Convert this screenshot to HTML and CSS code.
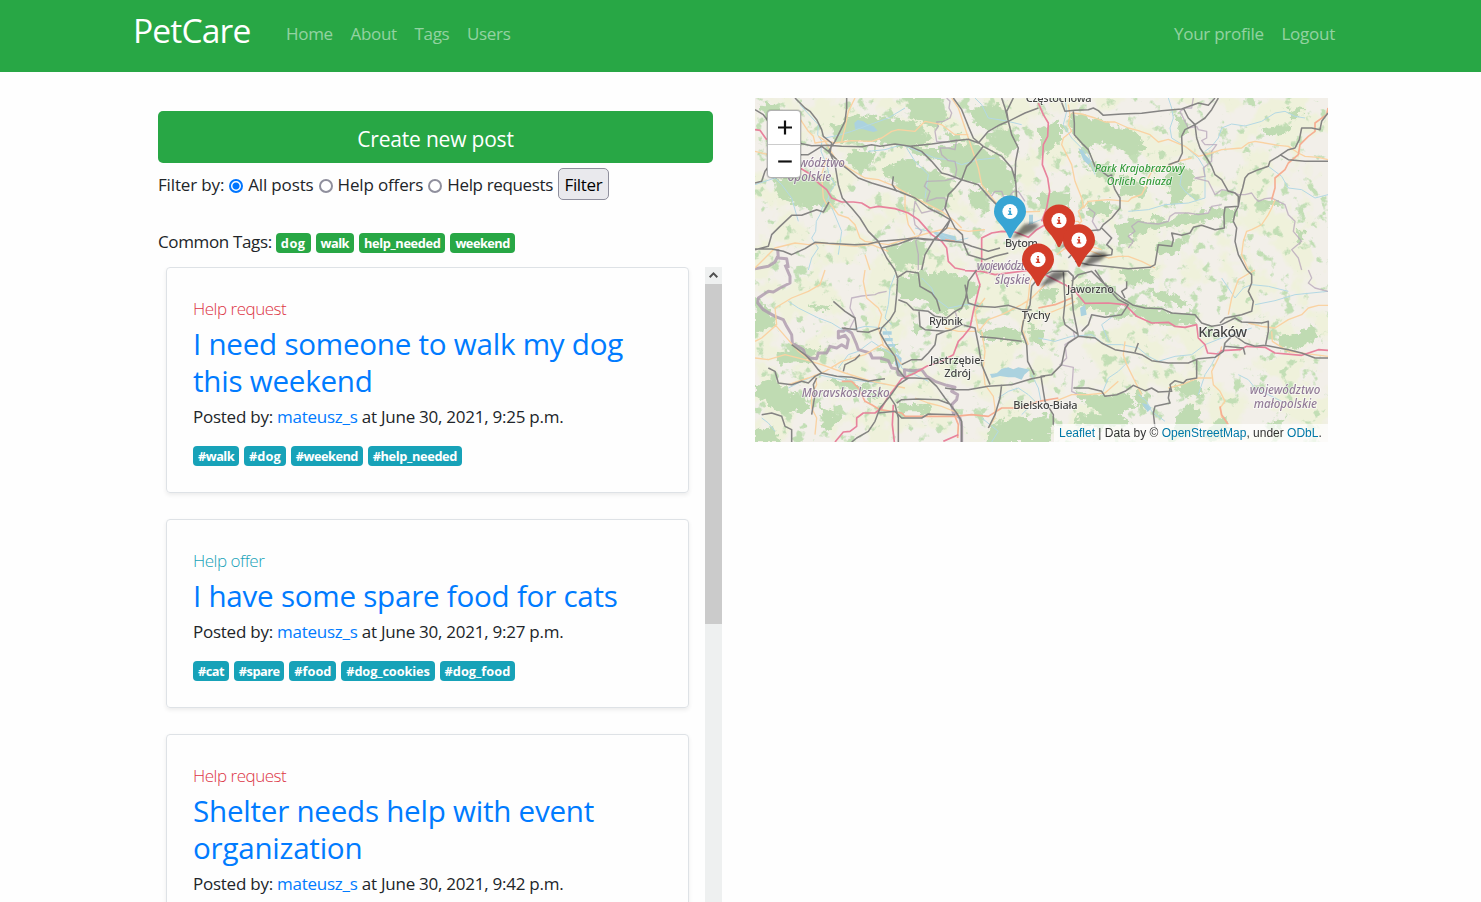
FILE: index.html
```html
<!DOCTYPE html>
<html lang="en">
<head>
<meta charset="utf-8">
<title>PetCare</title>
<link rel="stylesheet" href="styles.css">
</head>
<body>
<nav class="navbar">
  <a class="brand">PetCare</a>
  <div class="links"><a>Home</a><a>About</a><a>Tags</a><a>Users</a></div>
  <div class="links links-right"><a>Your profile</a><a>Logout</a></div>
</nav>
<main class="page">
  <section class="feed">
    <div class="tools">
      <a class="create">Create new post</a>
      <form class="filter">
        <span class="lead">Filter by:</span>
        <i class="radio on"></i><label>All posts</label>
        <i class="radio"></i><label>Help offers</label>
        <i class="radio"></i><label class="snug">Help requests</label>
        <button type="button">Filter</button>
      </form>
      <div class="common"><span class="snug">Common Tags:</span><b class="badge wider">dog</b><b class="badge tight">walk</b><b class="badge mid">help_needed</b><b class="badge tight">weekend</b></div>
    </div>
    <div class="scroller">
      <div class="posts">
        <article class="card">
          <div class="kind request">Help request</div>
          <h2>I need someone to walk my dog<br>this weekend</h2>
          <p>Posted by: <a>mateusz_s</a> at June 30, 2021, 9:25 p.m.</p>
          <div class="tags"><b class="badge tight">#walk</b><b class="badge wide">#dog</b><b class="badge tight">#weekend</b><b class="badge mid">#help_needed</b></div>
        </article>
        <article class="card short">
          <div class="kind offer">Help offer</div>
          <h2>I have some spare food for cats</h2>
          <p>Posted by: <a>mateusz_s</a> at June 30, 2021, 9:27 p.m.</p>
          <div class="tags"><b class="badge tight">#cat</b><b class="badge tight">#spare</b><b class="badge">#food</b><b class="badge close">#dog_cookies</b><b class="badge">#dog_food</b></div>
        </article>
        <article class="card">
          <div class="kind request">Help request</div>
          <h2>Shelter needs help with event<br>organization</h2>
          <p>Posted by: <a>mateusz_s</a> at June 30, 2021, 9:42 p.m.</p>
        </article>
      </div>
      <div class="scrollbar">
        <svg class="arrow" viewBox="0 0 17 17"><path d="M4.7 10.2 8.5 6.4l3.8 3.8" fill="none" stroke="#505050" stroke-width="2"/></svg>
        <div class="thumb"></div>
      </div>
    </div>
  </section>
  <section class="map">
    <svg class="tiles" viewBox="0 0 1719 1032">
      <defs>
        <filter id="woods" x="0" y="0" width="100%" height="100%" color-interpolation-filters="sRGB">
          <feTurbulence type="fractalNoise" baseFrequency="0.026" numOctaves="4" seed="7"/>
          <feColorMatrix values="0 0 0 0 .76  0 0 0 0 .87  0 0 0 0 .71  9 0 0 0 -5.5"/>
        </filter>
        <filter id="fields" x="0" y="0" width="100%" height="100%" color-interpolation-filters="sRGB">
          <feTurbulence type="fractalNoise" baseFrequency="0.009" numOctaves="4" seed="21"/>
          <feColorMatrix values="0 0 0 0 .937  0 0 0 0 .945  0 0 0 0 .86  0 9 0 0 -4.2"/>
        </filter>
        <filter id="edge" x="-5%" y="-5%" width="110%" height="110%">
          <feTurbulence type="fractalNoise" baseFrequency="0.045" numOctaves="3" seed="3"/>
          <feDisplacementMap in="SourceGraphic" scale="42" xChannelSelector="R" yChannelSelector="G"/>
          <feGaussianBlur stdDeviation="1.500"/>
        </filter>
        <filter id="blur"><feGaussianBlur stdDeviation="1.6"/></filter>
        <g id="pin">
          <path d="M3 25 14 13Q24 10 29 14L22 20Q12 25 2 27Z" fill="#000" opacity=".5" filter="url(#blur)"/>
          <path d="M-1.200 26Q-3 21-7.500 15.200C-12 10-16 6-16 0A16 16 0 0 1 16 0C16 6 12 10 7.500 15.200Q3 21 1.200 26Q0 27.500-1.200 26Z"/>
          <circle r="7.600" fill="#fff"/>
          <path d="M-.9-3.500H1V-2H-.9ZM-1.900-1H1.100V2.300H2.200V3.400H-2.200V2.300H-.9V0H-1.900Z"/>
        </g>
      </defs>
      <rect width="1719" height="1032" fill="#f2efe9"/>
      <rect width="1719" height="1032" filter="url(#fields)"/>
      <rect width="1719" height="1032" filter="url(#woods)"/>
      <g fill="#bfdbb2" filter="url(#edge)">
        <path d="M225 85 300 50 370 60 480 70 530 130 460 150 350 130 240 135ZM60 240 150 230 235 240 235 320 150 330 70 290ZM290 155 370 160 350 200 320 230 280 190ZM380 220 440 180 520 210 600 250 580 300 560 350 500 310 430 270ZM400 130 500 150 560 150 640 140 680 150 740 180 780 230 775 300 720 290 670 260 620 245 560 200 480 160ZM700 110 780 90 790 140 760 180 690 140ZM450 0 560 0 580 60 540 90 470 60ZM650 30 740 20 760 70 700 100 660 80ZM385 450 480 425 510 440 500 500 420 516ZM560 100 640 120 600 140ZM20 0 70 20 110 70 60 90 30 50ZM640 270 700 280 700 340 650 330ZM350 100 420 90 400 130Z"/>
        <path transform="translate(855)" d="M0 90 60 60 60 130 20 170 0 150ZM90 50 170 60 230 90 290 100 320 150 270 170 180 130 130 170 100 110ZM140 190 210 200 230 220 190 240 150 220ZM0 280 90 285 100 320 30 340 0 330ZM140 310 210 310 210 350 150 355ZM380 230 430 200 470 230 440 290 400 330ZM240 230 330 270 300 300 240 290ZM220 390 280 360 350 380 420 350 540 330 560 350 450 380 320 400 240 440ZM350 440 430 420 420 460 360 480ZM550 330 590 330 590 370 550 370ZM650 300 720 310 690 340ZM770 395 800 400 780 440ZM670 90 760 80 740 110 680 115ZM740 30 790 40 760 70ZM400 40 440 70 450 110 420 110ZM340 350 380 360 340 400Z"/>
        <path transform="translate(0 516)" d="M425 20 520 5 610 15 680 50 640 100 590 130 550 130 500 90 430 90ZM670 180 760 170 800 190 810 220 740 210 690 210ZM0 80 50 130 60 160 0 200ZM160 100 230 110 210 130ZM0 340 60 330 120 370 60 400 0 380ZM30 390 150 370 160 420 60 430ZM60 280 160 270 200 240 130 230 70 250ZM700 470 770 440 870 450 880 516 690 516ZM370 230 430 230 420 280 380 280ZM210 330 270 330 340 350 300 370ZM420 400 520 410 530 430 440 430ZM820 160 870 190 860 240 825 210ZM190 400 260 440 210 490ZM0 480 60 470 70 516 0 516ZM470 150 500 170 480 200ZM340 380 380 340 370 400Z"/>
        <path transform="translate(855 516)" d="M10 50 55 60 40 95 5 85ZM110 40 200 40 250 90 230 130 170 120 120 110ZM240 95 340 110 390 130 470 130 460 160 340 160 290 135ZM310 60 400 70 460 110 380 100ZM710 200 780 190 820 160 830 210 760 240 710 230ZM100 360 200 380 260 370 300 410 200 440 130 400ZM120 430 230 430 280 460 170 480 100 460ZM400 350 470 330 500 370 440 380ZM400 440 450 400 480 420 470 480 410 500ZM500 470 560 440 560 500 500 516ZM690 460 740 440 720 480ZM0 440 40 430 30 516 0 516ZM240 0 330 0 340 40 270 40ZM290 360 330 380 310 420 280 380ZM210 140 260 110 280 130 230 150Z"/>
      </g>
      <path fill="#abd2df" d="M298 75 308 66 325 70 340 80 355 84 368 98 355 102 340 98 325 94 300 92ZM530 400 560 404 600 415 605 430 580 432 560 425ZM822 350H834V378H822ZM970 150 985 158 992 172 1010 190 1000 200 985 186ZM383 700H410V710H383ZM388 720H413V730H390ZM395 738H420V746H398ZM420 765 440 780 438 800 432 812 420 800ZM705 828 725 826 740 812 760 808 775 814 790 808 825 815 808 830 800 845 780 838 760 838 735 834 710 840ZM975 630 990 620 995 650 978 655ZM1160 915 1180 920 1190 930 1178 942Z"/>
      <g class="lines">
        <path class="water" d="M135 20 190 80 188 110 200 130 198 160 215 200 222 230 240 260 226 280 220 300 205 320 195 350 184 370 182 400 170 420 190 450 170 480 160 516M210 120 250 112 290 100 330 85 400 60 450 30M340 160 390 155 440 140 480 155 540 180 580 185 620 200 670 185 720 180M220 300 235 340 260 400 250 470M480 390 530 402 560 410 600 430 640 420M455 150 480 190 520 230 510 300M0 260 60 240 80 260 110 300 130 370M660 0 680 20 700 60 750 68 800 80M1240 0 1250 30 1255 60 1245 90 1250 120 1290 145 1330 180 1348 210 1350 240 1350 300 1300 315 1230 320 1180 335 1120 340M1350 160 1370 145 1390 120 1400 90 1430 78 1470 84 1520 70 1560 45 1590 40 1620 55 1650 60M1540 205 1580 235 1600 270 1640 275 1680 300 1719 290M930 0 935 40 925 80 950 120 980 150 1000 170 1020 230M1280 230 1275 260 1290 280 1320 305M820 380 870 360"/>
        <path class="water" d="M100 610 130 630 190 660 230 675 270 700 330 685 390 690 410 730 430 770 440 810 480 830 520 850M250 810 280 770 310 760 350 730 380 750 430 780M420 530 405 570 400 620 390 660 410 680M500 540 530 570 540 600 580 630 630 620 680 620M230 830 280 845 330 850 400 860M100 870 140 850 190 830 280 850M730 900 760 880 790 870 820 890 840 910 800 950M830 830 850 870 860 920M850 720 900 730 950 715 1010 710 1050 740 1100 740 1150 750 1180 775 1210 790 1260 775 1310 770 1350 740 1400 720 1490 690M1060 730 1050 705 1040 680 1080 650M1500 620 1560 608 1620 590 1719 580M1400 540 1420 570 1440 600 1465 570 1490 560 1540 565 1600 580M1390 760 1370 800 1350 830 1330 890M1450 830 1480 845 1500 870 1540 890 1600 920M1120 790 1090 820 1060 840 1040 890M1150 890 1175 910 1190 940 1230 970M680 960 705 980 730 1000 710 1032M20 960 40 975 60 1000"/>
        <path class="border" d="M575 0 585 10 582 30 590 45 585 60 565 70 545 72 550 85 540 100 545 130 580 132 605 125 600 155 580 150 555 150 560 170 580 188 600 190 605 215 600 240 570 248 515 250 508 265 525 280 515 310 545 300 570 300 575 325 560 340 530 338 500 345 480 310 475 350 480 380 500 400 482 430 490 470 490 516M690 290 710 294 720 280 740 280 745 295 760 300 775 280 790 280 810 310M1315 0 1310 30 1290 30 1275 40 1290 70 1300 90 1325 85 1330 95 1355 100 1355 120 1340 128 1350 140 1385 140 1370 160 1370 190 1345 210 1350 235 1320 240 1360 250 1370 270 1380 290 1400 275 1430 280 1450 290 1470 290 1490 285 1500 300 1510 310 1530 302 1550 300 1570 310 1590 320 1600 350 1620 370 1615 400 1640 430 1610 455 1630 480 1640 516M1400 320 1370 325 1360 345 1330 350 1300 345 1260 345 1245 355 1240 370 1210 378 1175 375 1150 370 1130 385 1140 400 1120 415 1135 430 1120 450M285 690 300 660 285 630 290 600 320 594 360 590 370 585 395 580M1660 516 1670 540 1660 555 1680 570 1719 580M955 700 960 720 930 740 935 780 915 800 955 808 950 880 970 890M1000 330 1020 345 1012 370 1030 400M600 640 610 670 600 690"/>
        <path class="frontier" d="M90 500 105 535 105 555 75 570 55 582 40 580 10 600 8 615 25 635 60 655 85 665 95 685 110 710 112 735 145 755 150 770 165 780 185 782 190 765 215 765 225 745 245 750 260 740 275 750 280 725 270 712 250 720 250 700 265 700 270 692 290 705 305 740 310 755 345 765 352 780 375 780 400 788 410 810 425 812 430 830 450 835 448 815 475 818 500 815 515 835 540 850 575 862 600 868 590 880 608 890 605 905 590 920 595 945 615 960 620 985 620 1032M68 453 70 480 95 482 100 510M68 475 60 492 40 505 0 512"/>
        <path class="road" d="M190 115 210 128 240 135 290 128 350 130 380 120 410 100 430 95 480 100 510 70 560 80 600 110 640 110M260 130 270 90 280 40 300 0M120 40 160 100 175 115 180 135 210 130 240 180 280 210 330 240 370 245 420 265 460 290 520 320 560 340 600 370 620 390M590 0 610 30 640 120 660 180 670 210 680 260 720 310 760 350 800 342 855 340M400 460 350 440 300 445 200 435 160 440 120 435 60 450 0 510M220 310 250 350 280 360 300 380 315 420 330 430 400 440 450 425 520 405 580 390 640 400 690 395M450 290 450 330 460 380 480 410M215 180 200 230 205 300 215 320M330 470 345 516M0 160 40 170"/>
        <path class="road" d="M60 630 110 600 160 580 195 560 210 516M100 860 160 840 210 820 260 790 330 770 380 740 410 760 440 800M330 516 325 550 335 600 370 630 380 650 370 690 385 740M180 830 185 860 170 890 170 930 185 960 180 1010M0 780 40 785 90 770 150 785 200 800 270 825 350 850 450 870M480 900 520 915 560 925 610 945M60 630 65 680 20 720 0 730M60 680 130 760 170 790M680 700 690 760 685 810 690 860 715 895 720 930 720 960 700 990M850 516 825 550 820 600 800 690 820 740M670 700 700 665 740 650 800 620 830 600 870 560M570 690 610 700 660 700M870 650 920 630 960 610M690 600 660 640 670 700"/>
        <path class="road" d="M940 20 945 50 940 80 950 100 925 120 920 140 950 200 960 250 980 300 985 325 970 340 980 370 960 390 960 440 925 455 905 470M950 45 980 48 1020 60 1050 72 1080 72 1120 90 1150 98 1185 110 1210 132 1240 124 1290 145 1330 175 1370 165 1400 155 1460 150 1480 135 1500 130 1570 142 1600 145 1630 165 1650 175 1690 178 1719 185M1310 180 1260 192 1240 205 1210 210 1190 220 1180 240 1175 260 1160 290 1130 300 1120 310 1060 305 1000 310 985 330M1560 305 1550 330 1540 350 1520 380 1490 395 1475 400 1465 430 1460 470 1480 516M970 450 1010 460 1060 480 1090 475 1120 475 1160 490 1200 510M870 380 910 370 970 370 990 400 990 440 1040 455M1500 516 1450 545 1430 600 1420 650M1480 675 1520 685 1560 690 1600 665 1640 650 1660 630 1690 622 1719 622M1110 730 1105 770 1115 800 1130 830 1150 870 1160 890M1400 745 1390 780 1370 820 1375 860 1395 880 1410 910 1395 930 1400 960M1370 840 1330 840 1280 860 1240 870M1550 700 1552 730 1600 760 1719 775M1090 850 1050 885 1000 890 950 890 900 910"/>
        <path class="trunk" d="M1719 30 1715 50 1680 75 1680 100 1660 115 1635 140 1630 170 1600 195 1590 215 1560 240 1560 270 1550 305M260 850 290 850 310 870 330 910 350 920 375 935 440 945 450 955 520 955 600 955 650 950 700 955 740 930 800 930 850 910 910 900M600 955 610 980 608 1020M1395 925 1400 950 1420 980M850 630 900 620 950 600M570 425 600 430"/>
        <path class="motorway" d="M0 95 15 97 35 125M135 210 160 225 190 255 215 275 230 300 260 312 295 312 320 315 345 330 370 325 420 332 460 345 490 365 530 410 560 430 575 450 580 490 600 510 630 516M680 500 680 420 710 405 740 400 780 402 820 418 845 395 870 380M850 15 865 50 880 75 878 115 865 140 862 200 878 240 884 280 875 330 860 370M660 516 675 560 665 600 655 640 645 690 625 715 610 730 595 770 560 790 515 805 480 825 440 842 420 870 400 895 380 930 360 945 325 945 305 960 305 985 285 1000 265 1002 240 1032M415 920 412 980 418 1032M630 518 680 520 720 530 830 516M870 530 930 560 960 580 990 616 1060 615 1110 620 1145 655 1190 675 1240 673 1260 685 1290 688 1325 680 1330 720 1350 740 1358 765 1390 768 1400 758 1455 755 1475 745 1530 748 1560 765 1640 772 1690 755 1719 757M565 1030 610 1010"/>
        <path class="rail" d="M120 0 150 30 165 40 185 65 200 95 205 115 230 135 225 165 240 200 250 260 262 300 290 330 315 360 340 400 370 430 395 480 420 516M0 35 25 50 40 70M130 135 170 143 220 142 260 145 320 146 350 140 375 145 420 138 465 145 530 138 600 128 640 124 670 135 700 100 735 80 760 70 810 45 850 30M275 0 275 30 270 70 255 100 240 130 220 160M220 160 200 145 160 170 130 170M220 160 260 200 280 215 310 240 350 255 400 270 430 280 480 300 520 330 560 350 585 365 575 390 540 420 510 470 500 516M415 235 412 260 425 280M465 145 500 160 530 190 560 225 580 230 620 245 670 260 700 295 730 325M595 0 620 35 640 85 655 120 685 145 740 175 770 210 782 250 785 300M740 0 750 30 760 70 770 110 790 150 782 190 780 250M775 0 755 40 760 70M685 145 650 190 635 205 620 245 600 270 580 290 570 330 585 360 600 390 622 410 625 435 640 470 690 485 720 475 760 465M0 453 50 453 85 460 110 470 150 452 180 433 220 436 300 440 340 438 375 430 430 425 480 420 510 425 540 425 620 433 650 445 700 460 735 450M0 255 20 250 30 220 45 200 80 175 130 160M0 455 40 445 50 410 75 385 110 352 140 352 185 335 205 342 222 312M380 450 430 438 480 420 540 425 560 400 585 365"/>
        <path class="rail" d="M915 0 930 40 960 37 1000 35 1015 30 1030 38 1045 52 1100 48 1160 46 1220 38 1280 33 1330 15 1360 22 1380 0M1390 0 1370 35 1350 60 1320 80 1290 95 1280 115 1282 165 1270 190 1240 200M955 40 958 75 958 110 985 140 1000 155 1010 180 1020 205 1040 220 1060 235 1070 230M1070 230 1072 250 1080 275 1095 300 1095 330 1070 360 1045 380 1035 395 990 400 970 410M1285 30 1300 60 1320 80 1325 120 1335 150 1355 180 1370 205 1380 230 1400 245 1420 280 1440 285 1450 295 1450 325 1410 328 1407 350 1408 390 1380 395 1340 382 1315 388 1305 405 1280 412 1250 405 1255 425 1250 445 1210 440 1200 500 1185 508 1120 512 1050 505 1000 500 960 490M1719 45 1700 70 1695 95 1670 90 1640 90 1633 125 1620 150 1600 155 1570 175 1545 190 1540 205 1510 215 1480 228 1470 240 1463 270 1455 295 1450 325 1440 345 1435 370 1445 390 1440 430 1450 470 1475 516M1575 170 1600 185 1650 190 1719 190M1040 390 1070 420 1055 440 1072 455 1070 470 1030 475 970 475M1000 450 960 460 940 480"/>
        <path class="rail" d="M420 516 428 540 425 590 420 640 405 665 380 690 375 705 395 740 420 775 430 815 450 840 480 840 520 842 545 865 570 900 605 945 620 970 620 1032M430 605 455 615 475 635 520 640 540 655 575 660 600 640 620 630 632 600 640 550 665 516M425 540 455 520 490 525 495 565 530 585 545 605 555 640M492 640 495 685 510 695 570 700 590 695 620 680 660 690 670 740 680 800 705 860M570 700 545 710 540 740 520 765 500 785 470 785 440 800M460 840 430 860 405 895 375 930 360 970 340 1000 305 1020 290 1032M40 810 60 820 70 855 110 860 140 850 160 855 180 835 200 825 245 835 290 838 340 850 365 845 390 842M110 740 130 755 150 770 170 790 190 815 200 825M170 950 180 890 175 860 185 840M265 820 270 800 300 785 315 770M400 890 420 920 430 960 430 1032M370 945 420 940 440 960 500 960 520 948 600 950M425 915 440 905 490 903 550 905 590 920M570 870 605 875 640 875 700 865 770 860 830 842 870 835M675 716 720 720 800 730M630 560 640 615 670 625 720 628 760 622 800 635 830 635M860 516 850 540 830 565 825 620 805 670 800 700 815 740 818 790 838 830M740 860 735 900 720 950 700 990M20 950 50 945 80 955 90 985 110 995 110 1032M235 610 270 640 300 660 305 695 260 690M305 700 340 703 375 690"/>
        <path class="rail" d="M870 530 890 520 940 520 955 535 950 580 955 640 970 715 940 735 930 750 920 800 890 830 858 835 865 880 870 910 895 950 895 980M970 715 1020 720 1040 735 1080 755 1140 765 1160 770 1190 788 1240 795 1300 795 1330 782 1380 778 1405 760 1410 735 1435 710 1470 735 1500 745 1530 742 1600 755 1640 765 1680 780 1719 780M950 550 970 530 1010 520 1040 550 1100 600 1135 622 1170 630 1220 632 1250 645 1320 650 1340 675 1370 685 1400 680 1440 660 1460 672 1520 675 1540 670 1540 700 1532 740M1020 516 1050 560 1090 605 1120 620 1100 650 1050 658 1010 650 1000 680 980 700M1325 785 1325 840 1295 845 1285 855 1260 848 1245 860 1250 880 1210 882 1190 870 1170 878 1135 862 1110 880 1085 890 1050 895 1040 880 1000 870 955 870M1475 516 1490 530 1490 555 1480 580 1495 610 1490 640 1460 650 1410 660 1395 675M1110 600 1100 580 1115 570 1115 550M1140 762 1150 735M1245 870 1240 900 1245 915 1200 925 1195 945 1200 990M1410 745 1465 750 1470 770M925 520 930 610 925 660 930 680 970 710"/>
      </g>
      <g class="places">
        <g class="region">
          <text x="133" y="206" textLength="137">wództwo</text><text x="98" y="249" textLength="131">opolskie</text>
          <text x="665" y="516" textLength="185">województwo</text><text x="720" y="559" textLength="106">śląskie</text>
          <text x="140" y="898" textLength="264">Moravskoslezsko</text>
          <text x="1484" y="887" textLength="212">województwo</text><text x="1496" y="931" textLength="190">małopolskie</text>
        </g>
        <g class="park"><text x="1019" y="222" textLength="270">Park Krajobrazowy</text><text x="1055" y="260" textLength="196">Orlich Gniazd</text></g>
        <text x="812" y="13" textLength="198">Częstochowa</text><text x="750" y="447" textLength="99">Bytom</text>
        <text x="522" y="682" textLength="102">Rybnik</text><text x="800" y="663" textLength="86">Tychy</text>
        <text x="525" y="797" textLength="162">Jastrzębie-</text><text x="568" y="838" textLength="80">Zdrój</text>
        <text x="775" y="934" textLength="193">Bielsko-Biała</text><text x="936" y="585" textLength="141">Jaworzno</text>
        <text class="city" x="1330" y="717" textLength="146">Kraków</text>
      </g>
      <g transform="scale(3)">
        <use href="#pin" x="255" y="113.500" fill="#38a5d4"/>
        <use href="#pin" x="304" y="122.500" fill="#d33d29"/>
        <use href="#pin" x="324" y="142.200" fill="#d33d29"/>
        <use href="#pin" x="283" y="161.500" fill="#d33d29"/>
      </g>
    </svg>
    <div class="zoom">
      <svg viewBox="0 0 32 33"><path d="M10 16.500H24M17 9.500V23.500"/></svg>
      <svg viewBox="0 0 32 33"><path d="M10 17H24"/></svg>
    </div>
    <div class="credit"><a>Leaflet</a> | Data by © <a>OpenStreetMap</a>, under <a>ODbL</a>.</div>
  </section>
</main>
</body>
</html>
```
FILE: styles.css
```css
* { box-sizing: border-box; }
body { margin: 0; height: 902px; overflow: hidden; background: #fefefe; color: #212529; font: 17px/26.4px "Open Sans", "Noto Sans", sans-serif; }
.navbar { display: flex; height: 72px; padding: 0 146px 0 133px; background: #28a745; color: #fff; }
.brand { width: 152px; font-size: 33.6px; line-height: 60px; letter-spacing: -.85px; }
.links { display: flex; gap: 17.6px; line-height: 67px; letter-spacing: -.3px; color: rgba(255,255,255,.5); padding-left: 1px; }
.links-right { margin-left: auto; letter-spacing: -.25px; }
.page { display: flex; }
.feed { width: 564px; margin-left: 158px; }
.tools { width: 555px; height: 195px; padding-top: 39px; }
.create { display: block; height: 52px; border-radius: 5px; background: #28a745; color: #fff; text-align: center; font-size: 21px; line-height: 56px; letter-spacing: -.2px; }
.filter { display: flex; align-items: center; height: 42px; letter-spacing: -.15px; }
.filter span, .filter label { padding-top: 2px; }
.snug { letter-spacing: -.36px; }
.radio { width: 14px; height: 14px; margin: 3px 5px 0; border: 2px solid #8f8f9d; border-radius: 50%; background: #fff; }
.radio.on { border-color: #0075ff; background: radial-gradient(circle, #0075ff 0 3px, #fff 4px); }
.filter button { margin-left: 5px; width: 51px; height: 32px; padding: 2px 0 0; border: 1px solid #8f8f9d; border-radius: 5px; background: #e9e9ed; font: inherit; letter-spacing: -.3px; }
.common { display: flex; align-items: center; gap: 5px; margin-top: 24px; }
.common span { margin-right: -1px; }
.common .badge { margin-top: 2px; }
.badge { padding: 0 5px; height: 20px; border-radius: 4px; background: #28a745; color: #fff; font-size: 12.8px; line-height: 21px; }
.tight { letter-spacing: -.53px; }
.mid { letter-spacing: -.37px; }
.close { letter-spacing: -.12px; }
.wide { letter-spacing: .13px; }
.wider { letter-spacing: .5px; }
.scroller { display: flex; justify-content: space-between; height: 635px; overflow: hidden; }
.posts { width: 523px; margin-left: 8px; }
.card { height: 225.8px; margin-bottom: 26.4px; padding: 28px 26px 0; border: 1px solid #dee2e6; border-radius: 4px; box-shadow: 0 2px 4px rgba(0,0,0,.075); }
.short { height: 188.8px; }
.kind { font-weight: 300; letter-spacing: -.48px; }
.request { color: #dc3545; }
.offer { color: #17a2b8; }
h2 { margin: 3.4px 0 4.2px; font-size: 29.6px; line-height: 36.9px; font-weight: 400; letter-spacing: -.25px; color: #007bff; }
p { margin: 0; letter-spacing: -.25px; }
p a { color: #007bff; }
.tags { display: flex; gap: 4.8px; margin-top: 15.4px; }
.tags .badge { background: #17a2b8; }
.scrollbar { width: 17px; background: #eef0f0; }
.arrow { display: block; width: 17px; height: 17px; }
.thumb { height: 340px; background: #cbcbcb; }
.map { position: relative; width: 573px; height: 344px; margin: 26px 0 0 33px; overflow: hidden; background: #f2efe9; }
.tiles { display: block; width: 573px; height: 344px; }
.lines { fill: none; stroke-linejoin: round; }
.water { stroke: #b3d8e4; stroke-width: 3; }
.border { stroke: #b9a9bb; stroke-width: 4; opacity: .8; }
.frontier { stroke: #ac98ad; stroke-width: 9; opacity: .8; }
.road { stroke: #fad2a2; stroke-width: 4; }
.trunk { stroke: #f6ae92; stroke-width: 5; }
.motorway { stroke: #e8829c; stroke-width: 5; }
.rail { stroke: #858483; stroke-width: 4.6; }
.places { font: 33px "Noto Sans", sans-serif; fill: #444; stroke: rgba(255,255,255,.6); stroke-width: 5px; paint-order: stroke; }
.places text { font-weight: 500; }
.region { font-size: 35px; font-style: italic; fill: #927b97; }
.park { font-size: 32px; font-style: italic; fill: #369b3c; }
.places .city { font-size: 43px; }
.zoom { position: absolute; left: 12px; top: 12px; width: 34px; border: 1px solid rgba(0,0,0,.3); border-radius: 4px; background: #fff; box-shadow: 0 0 0 1px rgba(0,0,0,.1); }
.zoom svg { display: block; width: 32px; height: 33px; fill: none; stroke: #111; stroke-width: 2.2; }
.zoom svg + svg { border-top: 1px solid #ccc; }
.credit { position: absolute; right: 0; bottom: 0; width: 274px; height: 18px; padding-left: 5px; background: rgba(255,255,255,.72); color: #333; font: 12px/18px "Liberation Sans", Arial, sans-serif; white-space: nowrap; }
.credit a { color: #0078a8; }
```
